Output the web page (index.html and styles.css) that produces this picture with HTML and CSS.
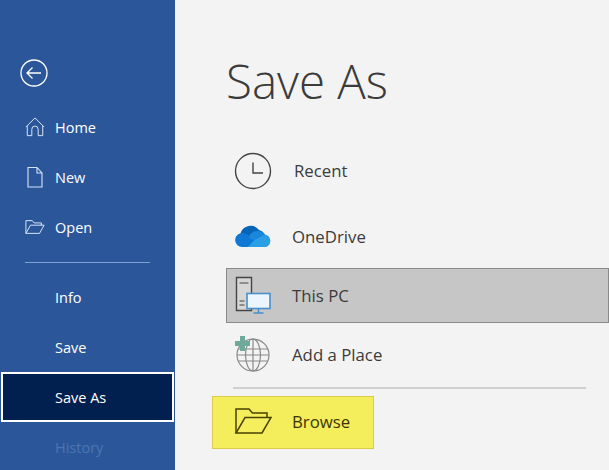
FILE: index.html
```html
<!DOCTYPE html>
<html lang="en">
<head>
    <meta charset="UTF-8">
    <meta name="viewport" content="width=device-width, initial-scale=1.0">
    <title>Save As</title>
    <link rel="stylesheet" href="styles.css">
</head>
<body>
    <div class="window">
        <nav class="sidebar">
            <div class="back">
                <svg width="30" height="30" viewBox="0 0 30 30" fill="none" stroke="#fff" stroke-width="1.3">
                    <circle cx="15" cy="15" r="13"/>
                    <path d="M22 15H8M13.5 9.5L8 15l5.500 5.500"/>
                </svg>
            </div>
            <a class="nav-item">
                <span class="nav-icon nav-icon-sm">
                    <svg width="20" height="20" viewBox="0 0 22 22" fill="none" stroke="#d5e3f7" stroke-width="1.1">
                        <path d="M1 11L11 1l10 10M2.500 10v10.500H7.500V13.500a3.500 3.500 0 0 1 7 0v7h5V10"/>
                    </svg>
                </span>
                Home
            </a>
            <a class="nav-item">
                <span class="nav-icon">
                    <svg width="22" height="22" viewBox="0 0 22 22" fill="none" stroke="#d5e3f7" stroke-width="1.1">
                        <path d="M4 1.500h9l5 5.500v14H4zM13 1.500V7h5"/>
                    </svg>
                </span>
                New
            </a>
            <a class="nav-item">
                <span class="nav-icon nav-icon-sm">
                    <svg width="20" height="20" viewBox="0 0 22 22" fill="none" stroke="#d5e3f7" stroke-width="1.1">
                        <path d="M1 18V4h7l2 2.500h8V9M1 18h15l5-9H6z"/>
                    </svg>
                </span>
                Open
            </a>
            <div class="nav-divider"></div>
            <a class="nav-item">Info</a>
            <a class="nav-item">Save</a>
            <a class="nav-item active">Save As</a>
            <a class="nav-item disabled">History</a>
        </nav>

        <main class="content">
            <h1>Save As</h1>
            <div class="place place-recent">
                <span class="place-icon">
                    <svg width="40" height="40" viewBox="0 0 40 40" fill="none" stroke="#444" stroke-width="1.4">
                        <circle cx="19" cy="20" r="17.500"/>
                        <path d="M19 11.500V22h10"/>
                    </svg>
                </span>
                <span class="place-name">Recent</span>
            </div>
            <div class="place place-drive">
                <span class="place-icon">
                    <svg width="40" height="26" viewBox="0 0 40 26">
                        <path d="M6.500 10.500A10.500 10.500 0 0 1 25 7a9 9 0 0 1 6 5L20 18z" fill="#0364b8"/>
                        <path d="M8 24a7 7 0 0 1-1.500-13.800c3.500-.4 6.500.8 8.500 2.800l10 4-11 7z" fill="#0f78d4"/>
                        <path d="M15 13c2-3.500 6-5.500 10-5 3 .4 5 2 6 4l-5 8-11-5z" fill="#1a86dc"/>
                        <path d="M31 11.500a6.500 6.500 0 0 1 1 12.500H12c2 0 3.500-1 4.500-3l4-4z" fill="#2a9fe6"/>
                    </svg>
                </span>
                <span class="place-name">OneDrive</span>
            </div>
            <div class="place place-pc">
                <span class="place-icon">
                    <svg width="40" height="40" viewBox="0 0 40 40" fill="none">
                        <path d="M1.500 1.500h15v33h-15z" fill="#d6d6d6" stroke="#444" stroke-width="1.400"/>
                        <path d="M4.500 7h9M4.500 25h5M4.500 29h5" stroke="#444" stroke-width="1.200"/>
                        <rect x="12" y="17.500" width="23" height="15" fill="#eaf5fd" stroke="#4a8fc9" stroke-width="1.600"/>
                        <path d="M23.500 32.500v4M18.500 37h10" stroke="#4a8fc9" stroke-width="1.600"/>
                    </svg>
                </span>
                <span class="place-name">This PC</span>
            </div>
            <div class="place place-add">
                <span class="place-icon">
                    <svg width="40" height="40" viewBox="0 0 40 40" fill="none" stroke="#8a8a8a" stroke-width="1.200">
                        <circle cx="19" cy="21" r="16"/>
                        <ellipse cx="19" cy="21" rx="7.500" ry="16"/>
                        <path d="M19 5v32M4 15h30M3 21h32M4 27h30"/>
                        <path d="M6 2h5v5h5v5h-5v5H6v-5H1V7h5z" fill="#6fa99b" stroke="none"/>
                    </svg>
                </span>
                <span class="place-name">Add a Place</span>
            </div>
            <div class="places-divider"></div>
            <div class="place place-browse">
                <span class="place-icon">
                    <svg width="40" height="28" viewBox="0 0 40 28" fill="none" stroke="#4a4300" stroke-width="1.500">
                        <path d="M2 26V2h13l3.500 4h14.500v4"/>
                        <path d="M2 26h26l9-15.500H11z" fill="#f5ef60"/>
                    </svg>
                </span>
                <span class="place-name">Browse</span>
            </div>
        </main>
    </div>
</body>
</html>
```

FILE: styles.css
```css
* {
    box-sizing: border-box;
}

body {
    margin: 0;
    font-family: 'Open Sans', sans-serif;
    background: #f3f3f3;
    color: #3b3b3b;
    overflow: hidden;
}

.window {
    display: flex;
    height: 470px;
    overflow: hidden;
}

/* Left blue column */
.sidebar {
    flex: 0 0 175px;
    background: #2b579a;
    color: #fff;
    font-size: 14.500px;
    display: flex;
    flex-direction: column;
}

.back {
    flex: 0 0 102px;
    padding: 58px 0 0 19px;
}

.nav-item {
    display: flex;
    align-items: center;
    flex: 0 0 50px;
    padding-left: 55px;
    position: relative;
}

.nav-icon {
    display: flex;
    width: 30px;
    margin-left: -31px;
    margin-right: 1px;
}

.nav-icon-sm {
    padding-left: 1px;
}

.nav-divider {
    flex: 0 0 1px;
    margin: 10px 25px 9px;
    background: #7ea2d6;
}

.nav-item.active {
    margin-left: 1px;
    margin-right: 1px;
    padding-left: 52px;
    background: #011f4f;
    border: 2px solid #fff;
}

.nav-item.disabled {
    color: #4d75b0;
}

/* Right side */
.content {
    flex: 1;
    padding-left: 37px;
    display: flex;
    flex-direction: column;
}

h1 {
    margin: 0;
    height: 141px;
    padding: 47px 0 0 14px;
    font-size: 47.500px;
    font-weight: 300;
    line-height: 68px;
}

.place {
    display: flex;
    align-items: center;
    margin-left: 14px;
    font-size: 16.800px;
}

.place-icon {
    display: flex;
    width: 66px;
    padding-left: 8px;
}

.place-recent {
    height: 60px;
}

.place-recent .place-name {
    margin: -2px 0 0 2px;
}

.place-drive {
    height: 60px;
    margin-top: 5px;
    margin-bottom: 2px;
}

.place-pc {
    height: 55px;
    background: #c6c6c6;
    border: 1px solid #8a8a8a;
}

.place-pc .place-icon {
    width: 65px;
}

.place-add {
    height: 60px;
    margin-top: 1px;
}

.places-divider {
    flex: 0 0 2px;
    margin: 3px 23px 7px 21px;
    background: #d0d0d0;
}

.place-browse {
    height: 53px;
    width: 162px;
    margin-left: 0;
    padding-bottom: 3px;
    background: #f4ee5c;
    border: 1px solid #dcc94a;
    color: #3a3500;
}

.place-browse .place-icon {
    width: 79px;
    padding-left: 21px;
}
```
